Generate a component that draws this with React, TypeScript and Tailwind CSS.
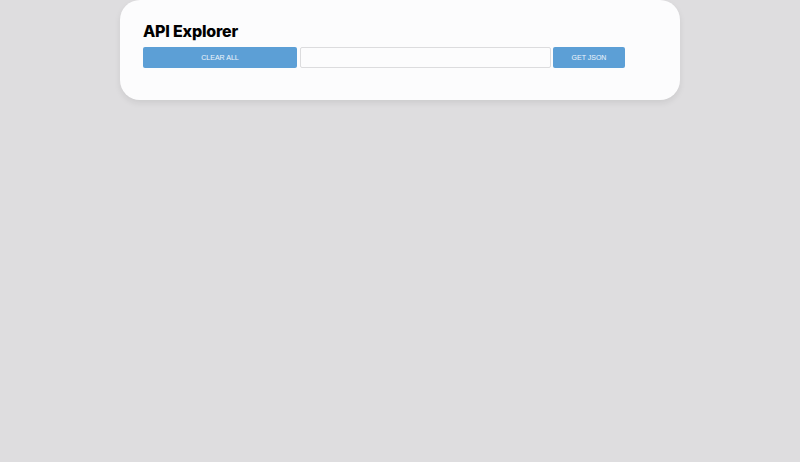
export default function App() {
  return (
    <div className="min-h-[462px] w-full bg-[#dedddf] font-['Liberation_Sans',Arial,sans-serif]">
      <div className="ml-[120px] w-[560px] h-[100px] rounded-[20px] bg-[#fcfcfd] shadow-[0_3px_6px_rgba(0,0,0,0.08)] px-[23px] pt-[20px]">
        <h1 className="font-['Inter',sans-serif] text-[16px] font-extrabold leading-[22px] tracking-[-0.2px] text-black">
          API Explorer
        </h1>
        <div className="mt-[5px] flex items-center gap-[3px]">
          <button className="h-[21px] w-[154px] rounded-[2px] bg-[#5c9fd6] pt-px text-[7px] text-white/90">
            CLEAR ALL
          </button>
          <input
            className="h-[21px] w-[251px] rounded-[2px] border border-[#dcdcde] bg-[#fcfcfd] px-2 text-[8px] outline-none"
            type="text"
          />
          <button className="-ml-px h-[21px] w-[72px] rounded-[2px] bg-[#5c9fd6] pt-px text-[7px] text-white/90">
            GET JSON
          </button>
        </div>
      </div>
    </div>
  );
}
